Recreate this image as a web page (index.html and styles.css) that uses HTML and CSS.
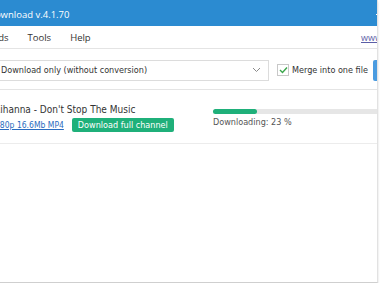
FILE: index.html
```html
<!DOCTYPE html>
<html>

<head>
  <meta charset="utf-8">
  <meta name="viewport" content="width=device-width">
  <title>Video Download</title>
  <link rel="stylesheet" href="styles.css">
</head>

<body>
  <div class="window">
    <div class="titlebar">
      <span class="title">Download v.4.1.70</span>
      <span class="minimize"></span>
    </div>

    <div class="menubar">
      <span class="menu-item first">Downloads</span>
      <span class="menu-item">Tools</span>
      <span class="menu-item">Help</span>
      <a class="site-link" href="#">www.4kdownload.com</a>
    </div>

    <div class="toolbar">
      <div class="combo">
        <span>Download only (without conversion)</span>
        <svg class="chevron" width="9" height="6" viewBox="0 0 9 6">
          <path d="M1 1 L4.5 4.5 L8 1" fill="none" stroke="#8a8a8a" stroke-width="1" />
        </svg>
      </div>
      <label class="merge">
        <span class="checkbox">
          <svg width="9" height="8" viewBox="0 0 9 8">
            <path d="M1 4 L3.5 6.5 L8 1.5" fill="none" stroke="#3aa64a" stroke-width="1.4" />
          </svg>
        </span>
        <span>Merge into one file</span>
      </label>
      <div class="go-btn"></div>
    </div>

    <div class="item">
      <div class="item-info">
        <div class="item-title">Rihanna - Don't Stop The Music</div>
        <div class="item-meta">
          <a href="#" class="format">480p 16.6Mb MP4</a>
          <span class="channel-btn">Download full channel</span>
        </div>
      </div>
      <div class="item-progress">
        <div class="track"><div class="fill" style="width: 23%"></div></div>
        <div class="status">Downloading: 23 %</div>
      </div>
    </div>

    <div class="empty"></div>
  </div>
</body>

</html>
```

FILE: styles.css
```css
body {
  margin: 0;
  background: #ffffff;
  font-family: 'DejaVu Sans Condensed', 'DejaVu Sans', sans-serif;
  overflow: hidden;
}

.window {
  width: 377px;
  height: 282px;
  border-right: 1px solid #e2e2e2;
  border-bottom: 1px solid #cfcfcf;
  box-shadow: 0 2px 2px rgba(0, 0, 0, 0.15);
  overflow: hidden;
  white-space: nowrap;
}

.titlebar {
  height: 26px;
  background: #2b8bd1;
  color: #ffffff;
  font-family: 'Open Sans', sans-serif;
  font-size: 9.5px;
  display: flex;
  align-items: center;
  justify-content: space-between;
  padding-top: 2px;
  box-sizing: border-box;
}

.title {
  margin-left: -12px;
}

.minimize {
  width: 8px;
  height: 1px;
  background: #ffffff;
  margin-right: -7px;
}

.menubar {
  height: 22px;
  border-bottom: 1px solid #e4e4e4;
  font-family: 'Open Sans', sans-serif;
  font-size: 9.5px;
  color: #333333;
  display: flex;
  align-items: center;
  gap: 19px;
}

.menu-item.first {
  margin-left: -41px;
}

.site-link {
  margin-left: auto;
  margin-right: -84px;
  width: 100px;
  flex-shrink: 0;
  color: #5b5ea6;
  font-size: 9px;
}

.toolbar {
  height: 41px;
  border-bottom: 1px solid #e4e4e4;
  display: flex;
  align-items: center;
  padding-top: 2px;
  box-sizing: border-box;
}

.combo {
  width: 278px;
  height: 21px;
  margin-left: -9px;
  flex-shrink: 0;
  box-sizing: border-box;
  border: 1px solid #dcdcdc;
  display: flex;
  align-items: center;
  justify-content: space-between;
  padding: 0 7px 0 9px;
  font-size: 9px;
  color: #333333;
}

.merge {
  display: flex;
  align-items: center;
  gap: 3px;
  margin-left: 8px;
  font-size: 9px;
  color: #333333;
}

.checkbox {
  width: 10px;
  height: 10px;
  border: 1px solid #c8c8c8;
  display: flex;
  align-items: center;
  justify-content: center;
}

.go-btn {
  margin-left: auto;
  width: 4px;
  height: 21px;
  background: #4a9be0;
  border-radius: 2px 0 0 2px;
  flex-shrink: 0;
}

.item {
  height: 54px;
  border-bottom: 1px solid #ececec;
  display: flex;
  align-items: flex-start;
  padding-top: 14px;
  box-sizing: border-box;
}

.item-info {
  margin-left: -6px;
  width: 219px;
  flex-shrink: 0;
}

.item-title {
  font-size: 10px;
  color: #333333;
}

.item-meta {
  display: flex;
  align-items: center;
  gap: 8px;
  margin-top: 3px;
  font-size: 8.5px;
}

.format {
  color: #2a6cc0;
  margin-left: 1px;
}

.channel-btn {
  background: #1fb07a;
  color: #ffffff;
  padding: 2px 6px;
  border-radius: 2px;
  font-size: 9px;
}

.item-progress {
  flex: 1;
  padding-top: 5px;
}

.track {
  height: 5px;
  background: #e6e6e6;
  border-radius: 3px 0 0 3px;
  margin-right: -27px;
}

.fill {
  height: 100%;
  background: #1fb07a;
  border-radius: 3px;
}

.status {
  margin-top: 3px;
  font-size: 9px;
  color: #555555;
}
```
